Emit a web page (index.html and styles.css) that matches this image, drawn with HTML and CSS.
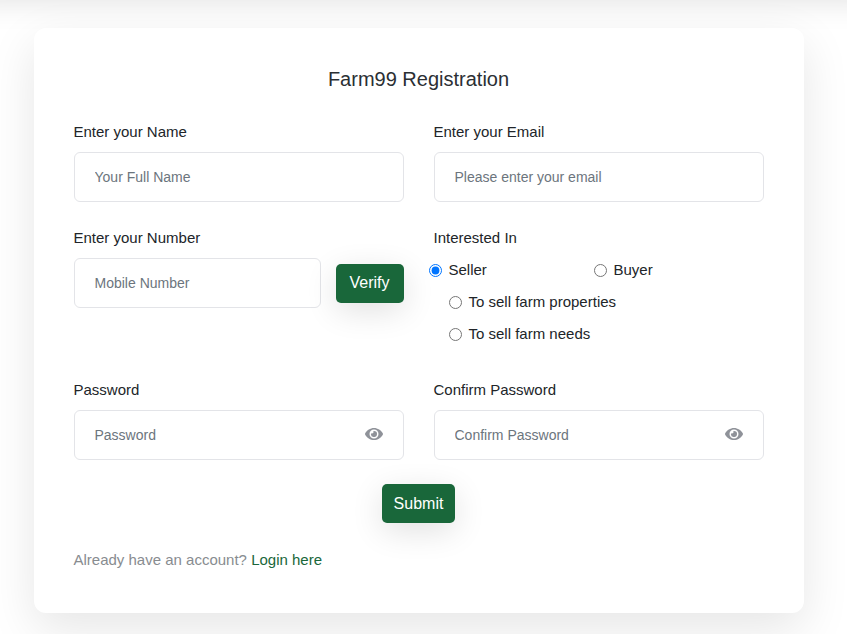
FILE: index.html
```html
<!DOCTYPE html>
<html lang="en">
<head>
<meta charset="utf-8">
<title>Farm99 Registration</title>
<link rel="stylesheet" href="styles.css">
</head>
<body>
<div class="topbar"></div>
<main class="card">
  <h1 class="title">Farm99 Registration</h1>
  <form>
    <div class="row">
      <div class="field">
        <label class="label">Enter your Name</label>
        <input class="input" type="text" placeholder="Your Full Name">
      </div>
      <div class="field">
        <label class="label">Enter your Email</label>
        <input class="input" type="text" placeholder="Please enter your email">
      </div>
    </div>
    <div class="row">
      <div class="field">
        <label class="label">Enter your Number</label>
        <div class="phone">
          <input class="input" type="text" placeholder="Mobile Number">
          <button class="btn btn-verify" type="button">Verify</button>
        </div>
      </div>
      <div class="field">
        <label class="label">Interested In</label>
        <div class="radios">
          <div class="radio-main">
            <label class="radio"><input type="radio" name="role" checked><span>Seller</span></label>
            <label class="radio"><input type="radio" name="role"><span>Buyer</span></label>
          </div>
          <div class="radio-sub">
            <label class="radio"><input type="radio" name="sub"><span>To sell farm properties</span></label>
            <label class="radio"><input type="radio" name="sub"><span>To sell farm needs</span></label>
          </div>
        </div>
      </div>
    </div>
    <div class="row">
      <div class="field">
        <label class="label">Password</label>
        <div class="password">
          <input class="input" type="password" placeholder="Password">
          <svg class="eye" viewBox="0 0 576 512" aria-hidden="true"><path d="M572.52 241.4C518.29 135.59 407.81 64 288 64S57.68 135.64 3.48 241.41a32.35 32.35 0 0 0 0 29.19C57.71 376.41 168.19 448 288 448s230.32-71.64 284.52-177.41a32.35 32.35 0 0 0 0-29.19zM288 400a144 144 0 1 1 144-144 143.93 143.93 0 0 1-144 144zm0-240a95.31 95.31 0 0 0-25.31 3.79 47.85 47.85 0 0 1-66.9 66.9A95.78 95.78 0 1 0 288 160z"/></svg>
        </div>
      </div>
      <div class="field">
        <label class="label">Confirm Password</label>
        <div class="password">
          <input class="input" type="password" placeholder="Confirm Password">
          <svg class="eye" viewBox="0 0 576 512" aria-hidden="true"><path d="M572.52 241.4C518.29 135.59 407.81 64 288 64S57.68 135.64 3.48 241.41a32.35 32.35 0 0 0 0 29.19C57.71 376.41 168.19 448 288 448s230.32-71.64 284.52-177.41a32.35 32.35 0 0 0 0-29.19zM288 400a144 144 0 1 1 144-144 143.93 143.93 0 0 1-144 144zm0-240a95.31 95.31 0 0 0-25.31 3.79 47.85 47.85 0 0 1-66.9 66.9A95.78 95.78 0 1 0 288 160z"/></svg>
        </div>
      </div>
    </div>
    <div class="actions">
      <button class="btn btn-submit" type="button">Submit</button>
    </div>
    <p class="footer">Already have an account? <a class="link" href="#">Login here</a></p>
  </form>
</main>
</body>
</html>
```
FILE: styles.css
```css
* { box-sizing: border-box; }
html, body { height: 100%; }
body {
  margin: 0;
  background: #fff;
  font-family: "Liberation Sans", Arial, sans-serif;
  font-size: 15px;
  color: #212529;
  overflow: hidden;
}
.topbar {
  height: 0;
  box-shadow: 0 -30px 32px 30px rgba(0, 0, 0, .13);
}
.card {
  width: 770px;
  height: 585px;
  margin: 28px 0 0 33.5px;
  padding: 40px;
  background: #fff;
  border-radius: 12px;
  box-shadow: 0 16px 48px rgba(0, 0, 0, .1);
}
.title {
  margin: 0 0 30px;
  font-size: 20px;
  font-weight: 400;
  line-height: 22px;
  text-align: center;
  color: #2b2f33;
}
.row {
  display: grid;
  grid-template-columns: 330px 330px;
  column-gap: 30px;
  margin-bottom: 24px;
}
.label {
  display: block;
  line-height: 24px;
  margin-bottom: 8px;
}
.input {
  display: block;
  width: 100%;
  height: 50px;
  padding: 0 20px;
  border: 1px solid #e3e4e8;
  border-radius: 6px;
  background: #fff;
  font-family: inherit;
  font-size: 14px;
  color: #212529;
  outline: none;
}
.input::placeholder { color: #6c757d; opacity: 1; }
.phone {
  display: flex;
  align-items: center;
  gap: 15px;
}
.phone .input { width: 247px; flex: none; }
.btn {
  height: 39px;
  border: 0;
  border-radius: 5px;
  background: #19673a;
  color: #fff;
  font-family: inherit;
  font-size: 16px;
  box-shadow: 0 8px 32px rgba(0, 0, 0, .12);
}
.btn-verify { width: 68px; padding: 0; }
.btn-submit { width: 73px; padding: 0; }
.radios { height: 96px; margin-bottom: 4px; margin-top: -4px; }
.radio-main {
  display: grid;
  grid-template-columns: 165px auto;
  margin-left: -5px;
}
.radio-sub { margin-left: 15px; }
.radio {
  display: flex;
  align-items: center;
  height: 32px;
  line-height: 32px;
}
.radio input {
  flex: none;
  width: 13px;
  height: 13px;
  margin: 0 7px 0 0;
}
.password { position: relative; }
.eye {
  position: absolute;
  top: 16px;
  right: 21px;
  width: 18px;
  height: 16px;
  fill: #8f9299;
}
.actions {
  display: flex;
  justify-content: center;
}
.footer {
  margin: 25px 0 0;
  line-height: 24px;
  color: #888c90;
}
.link { color: #19673a; text-decoration: none; }
```
